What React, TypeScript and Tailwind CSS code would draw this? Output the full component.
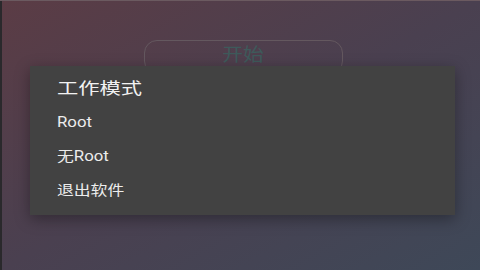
export default function App() {
  const font = { fontFamily: 'Roboto, "Noto Sans CJK SC", sans-serif' };
  return (
    <div
      className="relative w-[480px] h-[270px] overflow-hidden bg-[linear-gradient(to_bottom_right,#5b3c45_0%,#4a4050_50%,#3e4858_100%)]"
      style={font}
    >
      <div className="absolute left-0 top-0 h-full w-[2px] bg-[#2a292c]" />
      <div className="absolute left-0 top-0 w-full h-px bg-[#6b5a60]" />
      <div className="flex justify-center pt-[40px] pl-[6px]">
        <div className="w-[199px] h-[34px] rounded-[13px] border border-[#64585f] flex items-start justify-center pt-[3px]">
          <span className="text-[18px] leading-[22px] text-[#3e5a5b] inline-block scale-x-[1.15]">开始</span>
        </div>
      </div>
      <div className="absolute left-[30px] top-[66px] w-[425px] h-[149px] bg-[#424242] shadow-[0_4px_14px_rgba(0,0,0,0.35)] pl-[27px] pt-[13px]">
        <div className="h-[20px] flex items-center">
          <span className="text-[16px] leading-[20px] text-[#f2f2f2] inline-block origin-left scale-x-[1.33]">工作模式</span>
        </div>
        <div className="mt-[6px] flex flex-col">
          {["Root", "无Root", "退出软件"].map((t) => (
            <div key={t} className="h-[34px] flex items-center">
              <span className="text-[14px] leading-[18px] text-[#ececec] inline-block origin-left scale-x-[1.2]">{t}</span>
            </div>
          ))}
        </div>
      </div>
    </div>
  );
}
